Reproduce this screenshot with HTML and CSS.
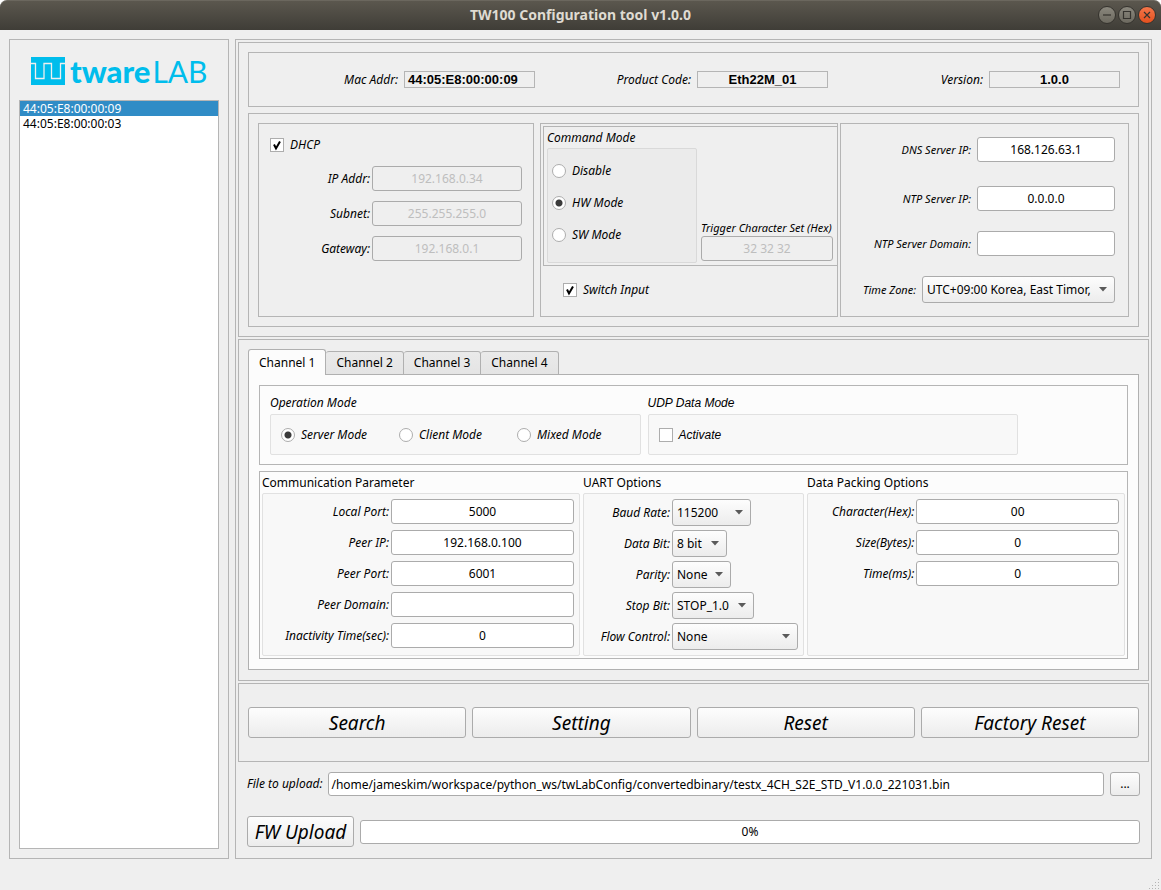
FILE: index.html
```html
<!DOCTYPE html>
<html lang="en">
<head>
<meta charset="utf-8">
<title>TW100 Configuration tool v1.0.0</title>
<link rel="stylesheet" href="styles.css">
</head>
<body>
<div class="window">
  <header class="titlebar">
    <h1 class="window-title">TW100 Configuration tool v1.0.0</h1>
    <div class="window-buttons">
      <button class="win-btn" type="button" aria-label="Minimize"><svg viewBox="0 0 16 16"><path d="M4 8h8"/></svg></button>
      <button class="win-btn" type="button" aria-label="Maximize"><svg viewBox="0 0 16 16"><path d="M4.500 4.500h7v7h-7z"/></svg></button>
      <button class="win-btn win-close" type="button" aria-label="Close"><svg viewBox="0 0 16 16"><path d="M5 5l6 6M11 5l-6 6"/></svg></button>
    </div>
  </header>

  <main class="workspace">
    <aside class="frame sidebar">
      <div class="logo">
        <svg class="logo-mark" viewBox="0 0 34 28" aria-hidden="true">
          <path fill="#00bdec" d="M0 0h34v28H0z"/>
          <path fill="none" stroke="#efefef" stroke-width="1.300" d="M0 6.500H4.500V21.500H13V6.500H20.500V21.500H29.500V6.500H34"/>
        </svg>
        <span class="logo-bold">tware</span><span class="logo-light">LAB</span>
      </div>
      <ul class="device-list">
        <li class="device selected">44:05:E8:00:00:09</li>
        <li class="device">44:05:E8:00:00:03</li>
      </ul>
    </aside>

    <div class="frame content">
      <section class="frame section">
        <div class="frame info">
          <div class="info-item"><label for="mac">Mac Addr:</label><output id="mac" class="readout readout-left">44:05:E8:00:00:09</output></div>
          <div class="info-item"><label for="product">Product Code:</label><output id="product" class="readout">Eth22M_01</output></div>
          <div class="info-item"><label for="version">Version:</label><output id="version" class="readout">1.0.0</output></div>
        </div>

        <div class="frame network">
          <div class="frame dhcp">
            <label class="check"><input type="checkbox" checked>DHCP</label>
            <div class="dhcp-fields">
              <label for="ip">IP Addr:</label><input class="field" id="ip" type="text" value="192.168.0.34" disabled>
              <label for="subnet">Subnet:</label><input class="field" id="subnet" type="text" value="255.255.255.0" disabled>
              <label for="gateway">Gateway:</label><input class="field" id="gateway" type="text" value="192.168.0.1" disabled>
            </div>
          </div>

          <div class="frame command">
            <div class="frame command-frame">
              <h2 class="group-title italic">Command Mode</h2>
              <div class="command-row">
                <div class="group command-group">
                  <label class="check"><input type="radio" name="command">Disable</label>
                  <label class="check"><input type="radio" name="command" checked>HW Mode</label>
                  <label class="check"><input type="radio" name="command">SW Mode</label>
                </div>
                <div class="trigger">
                  <label class="small" for="trigger">Trigger Character Set (Hex)</label>
                  <input class="field" id="trigger" type="text" value="32 32 32" disabled>
                </div>
              </div>
            </div>
            <label class="check switch-input"><input type="checkbox" checked>Switch Input</label>
          </div>

          <div class="frame servers">
            <div class="server-row"><label class="small" for="dns">DNS Server IP:</label><input class="field" id="dns" type="text" value="168.126.63.1"></div>
            <div class="server-row"><label class="small" for="ntp">NTP Server IP:</label><input class="field" id="ntp" type="text" value="0.0.0.0"></div>
            <div class="server-row"><label class="small" for="ntp-domain">NTP Server Domain:</label><input class="field" id="ntp-domain" type="text"></div>
            <div class="server-row zone-row"><label class="small" for="zone">Time Zone:</label><select class="combo" id="zone"><option>UTC+09:00 Korea, East Timor, F</option></select></div>
          </div>
        </div>
      </section>

      <section class="frame section channels">
        <div class="tabs" role="tablist">
          <button class="tab active" type="button" role="tab" aria-selected="true">Channel 1</button>
          <button class="tab" type="button" role="tab">Channel 2</button>
          <button class="tab" type="button" role="tab">Channel 3</button>
          <button class="tab" type="button" role="tab">Channel 4</button>
        </div>
        <div class="pane">
          <div class="frame modes">
            <div class="mode">
              <h2 class="group-title italic">Operation Mode</h2>
              <div class="group mode-group">
                <label class="check"><input type="radio" name="operation" checked>Server Mode</label>
                <label class="check"><input type="radio" name="operation">Client Mode</label>
                <label class="check"><input type="radio" name="operation">Mixed Mode</label>
              </div>
            </div>
            <div class="mode arial">
              <h2 class="group-title italic">UDP Data Mode</h2>
              <div class="group mode-group">
                <label class="check"><input type="checkbox">Activate</label>
              </div>
            </div>
          </div>

          <div class="frame params">
            <div class="param comm">
              <h2 class="group-title">Communication Parameter</h2>
              <div class="group param-group">
                <label for="local-port">Local Port:</label><input class="field" id="local-port" type="text" value="5000">
                <label for="peer-ip">Peer IP:</label><input class="field" id="peer-ip" type="text" value="192.168.0.100">
                <label for="peer-port">Peer Port:</label><input class="field" id="peer-port" type="text" value="6001">
                <label for="peer-domain">Peer Domain:</label><input class="field" id="peer-domain" type="text">
                <label for="inactivity">Inactivity Time(sec):</label><input class="field" id="inactivity" type="text" value="0">
              </div>
            </div>
            <div class="param uart">
              <h2 class="group-title">UART Options</h2>
              <div class="group param-group">
                <label for="baud">Baud Rate:</label><select class="combo w-baud" id="baud"><option>115200</option></select>
                <label for="data-bit">Data Bit:</label><select class="combo w-data" id="data-bit"><option>8 bit</option></select>
                <label for="parity">Parity:</label><select class="combo w-parity" id="parity"><option>None</option></select>
                <label for="stop-bit">Stop Bit:</label><select class="combo w-stop" id="stop-bit"><option>STOP_1.0</option></select>
                <label for="flow">Flow Control:</label><select class="combo" id="flow"><option>None</option></select>
              </div>
            </div>
            <div class="param packing">
              <h2 class="group-title">Data Packing Options</h2>
              <div class="group param-group">
                <label for="char">Character(Hex):</label><input class="field" id="char" type="text" value="00">
                <label for="size">Size(Bytes):</label><input class="field" id="size" type="text" value="0">
                <label for="time">Time(ms):</label><input class="field" id="time" type="text" value="0">
              </div>
            </div>
          </div>
        </div>
      </section>

      <section class="frame actions">
        <button class="btn big" type="button">Search</button>
        <button class="btn big" type="button">Setting</button>
        <button class="btn big" type="button">Reset</button>
        <button class="btn big" type="button">Factory Reset</button>
      </section>

      <div class="upload-row file-row">
        <label for="file">File to upload:</label>
        <input class="field path" id="file" type="text" value="/home/jameskim/workspace/python_ws/twLabConfig/convertedbinary/testx_4CH_S2E_STD_V1.0.0_221031.bin">
        <button class="btn browse" type="button">...</button>
      </div>
      <div class="upload-row">
        <button class="btn big fw" type="button">FW Upload</button>
        <div class="progress" role="progressbar" aria-valuemin="0" aria-valuemax="100" aria-valuenow="0">0%</div>
      </div>
    </div>
  </main>

  <footer class="statusbar">
    <svg class="grip" viewBox="0 0 12 12" aria-hidden="true"><path fill="#b4b4b4" d="M10 1h1v1h-1zM10 4h1v1h-1zM7 4h1v1h-1zM10 7h1v1h-1zM7 7h1v1h-1zM4 7h1v1h-1zM10 10h1v1h-1zM7 10h1v1h-1zM4 10h1v1h-1zM1 10h1v1h-1z"/></svg>
  </footer>
</div>
</body>
</html>
```
FILE: styles.css
```css
* { box-sizing: border-box; }

body {
  margin: 0;
  background: #fff;
  color: #000;
  font: 12px/16px "Noto Sans", sans-serif;
}

button, input, select { font: inherit; color: inherit; margin: 0; }
label { font-style: italic; white-space: nowrap; }

.window {
  display: flex;
  flex-direction: column;
  min-height: 100vh;
  background: #efefef;
  border-radius: 7px 7px 0 0;
}

.titlebar {
  display: grid;
  grid-template-columns: 1fr auto 1fr;
  align-items: center;
  height: 30px;
  padding: 0 5px 1px;
  background: linear-gradient(#5b574e, #3f3d37);
  border-top: 1px solid #6b675e;
  border-radius: 7px 7px 0 0;
}
.window-title {
  grid-column: 2;
  margin: 0;
  color: #dfdbd2;
  font-size: 14px;
  line-height: 20px;
}
.window-buttons { display: flex; justify-content: flex-end; gap: 2px; }
.win-btn {
  width: 18px;
  height: 18px;
  padding: 0;
  border: 1px solid #35332e;
  border-radius: 50%;
  background: linear-gradient(#8a877d, #6c695f);
}
.win-btn svg {
  display: block;
  width: 16px;
  height: 16px;
  fill: none;
  stroke: #35332e;
  stroke-width: 1.2;
}
.win-close { background: linear-gradient(#f4764a, #e3501e); }

.frame { border: 1px solid #b5b5b5; }
.group {
  border: 1px solid #d9d9d9;
  border-radius: 2px;
  background: #ebebeb;
}
.pane .group { border-color: #e1e1e1; background: #f8f8f8; }
.group-title { margin: 0; font-size: 12px; font-weight: 400; line-height: 16px; }
.italic { font-style: italic; }
.small { font-size: 11px; }
.arial { font-family: "Liberation Sans", sans-serif; }

.workspace { flex: 1; display: flex; gap: 6px; padding: 9px 9px 0; }

.sidebar { flex: none; width: 220px; display: flex; flex-direction: column; padding: 9px; }
.logo {
  display: flex;
  align-items: center;
  height: 51px;
  padding: 0 12px 8px;
  color: #00bdec;
  font: 900 31px/40px Lato, sans-serif;
}
.logo-mark { flex: none; width: 34px; height: 28px; margin-right: 5px; }
.logo-light { margin-left: 2px; font-weight: 400; font-size: 30px; }
.device-list {
  flex: 1;
  margin: 0;
  padding: 0;
  list-style: none;
  border: 1px solid #b5b5b5;
  background: #fff;
}
.device { padding: 0 3px; line-height: 15px; }
.selected { background: #308cc6; color: #fff; }

.content { flex: 1; min-width: 0; padding: 2px 2px 10px; }
.section { padding: 9px; margin-bottom: 2px; }

.info {
  display: grid;
  grid-template-columns: 286fr 293fr 292fr;
  align-items: center;
  padding: 18px 18px 18px 0;
  margin-bottom: 6px;
}
.info-item { display: flex; justify-content: flex-end; align-items: center; gap: 6px; }
.readout {
  width: 131px;
  padding: 0 3px;
  border: 1px solid #b5b5b5;
  font: bold 13px/15px "Liberation Sans", sans-serif;
  text-align: center;
}
.readout-left { text-align: left; }

.network {
  display: grid;
  grid-template-columns: 282fr 300fr 289fr;
  padding: 9px;
}
.dhcp { margin-right: 6px; padding: 13px 11px; }
.command { margin-right: 2px; padding: 2px 0 18px 2px; }
.servers { padding: 13px; }

.check { display: flex; align-items: center; gap: 6px; }
input[type="checkbox"], input[type="radio"] {
  appearance: none;
  flex: none;
  width: 14px;
  height: 14px;
  border: 1px solid #adadad;
  background: #fff center no-repeat;
}
input[type="radio"] { border-radius: 50%; }
input[type="checkbox"]:checked {
  background-image: url("data:image/svg+xml,%3Csvg xmlns='http://www.w3.org/2000/svg' width='12' height='12'%3E%3Cpath d='M3 5.500L5 9.500L9 2.500' fill='none' stroke='%23000' stroke-width='2'/%3E%3C/svg%3E");
}
input[type="radio"]:checked { background-image: radial-gradient(circle, #3b3b3b 3px, transparent 4px); }

.field {
  width: 100%;
  min-width: 0;
  height: 25px;
  padding: 0 3px;
  border: 1px solid #ababab;
  border-radius: 3px;
  background: #fff;
  text-align: center;
}
.field:disabled { background: #efefef; color: #bebebe; }

.combo {
  appearance: none;
  width: 100%;
  min-width: 0;
  height: 27px;
  padding: 0 20px 0 4px;
  border: 1px solid #ababab;
  border-radius: 3px;
  background:
    url("data:image/svg+xml,%3Csvg xmlns='http://www.w3.org/2000/svg' width='8' height='5'%3E%3Cpath d='M0 0h8L4 4.500z' fill='%235a5a5a'/%3E%3C/svg%3E") right 7px center no-repeat,
    linear-gradient(#fdfdfd, #ececec);
}

.dhcp-fields {
  display: grid;
  grid-template-columns: 100fr 150fr;
  align-items: center;
  gap: 10px 2px;
  padding-top: 13px;
}
.dhcp-fields label { text-align: right; }

.command-frame { padding: 3px 4px 2px 3px; border-right: 0; }
.command-row {
  display: grid;
  grid-template-columns: 150fr 132fr;
  gap: 4px;
  align-items: end;
  margin-top: 2px;
}
.command-group {
  display: grid;
  gap: 16px;
  padding: 14px 4px 19px;
}
.trigger { padding-bottom: 2px; }
.trigger label { display: block; }
.switch-input { margin: 16px 0 0 20px; }

.server-row { display: flex; justify-content: flex-end; align-items: center; gap: 6px; }
.server-row .field { width: 138px; }
.server-row .combo { width: 193px; }
.server-row:nth-child(2) { margin: 24px 0 20px; }
.zone-row { margin-top: 20px; }

.tabs { display: flex; align-items: flex-end; }
.tab {
  height: 24px;
  margin-bottom: -1px;
  padding: 0 10px;
  border: 1px solid #b0b0b0;
  border-left: 0;
  border-radius: 3px 3px 0 0;
  background: linear-gradient(#eaeaea, #e4e4e4);
}
.tab.active {
  position: relative;
  height: 26px;
  border-left: 1px solid #b0b0b0;
  border-bottom: 0;
  background: #fcfcfc;
}
.channels { padding-bottom: 10px; }
.pane { padding: 10px; border: 1px solid #b0b0b0; background: #fcfcfc; }

.modes {
  display: grid;
  grid-template-columns: 1fr 1fr;
  gap: 7px;
  padding: 9px 109px 9px 10px;
  margin-bottom: 6px;
}
.mode-group { display: flex; align-items: center; height: 41px; margin-top: 3px; padding-left: 10px; }
.mode-group .check { flex: 0 1 118px; }

.params { display: grid; grid-template-columns: 318fr 221fr 318fr; gap: 3px; padding: 2px; }
.param { display: flex; flex-direction: column; }
.param .group-title { margin: 1px 0 2px; }
.param-group {
  flex: 1;
  display: grid;
  align-items: center;
  align-content: start;
  gap: 6px 2px;
  padding: 5px;
}
.param-group label { text-align: right; }
.comm .param-group { grid-template-columns: 121fr 183fr; }
.uart .param-group { grid-template-columns: 81fr 126fr; row-gap: 4px; }
.packing .param-group { grid-template-columns: 101fr 202fr; }
.w-baud { width: 79px; }
.w-data { width: 55px; }
.w-parity { width: 59px; }
.w-stop { width: 82px; }

.actions {
  display: grid;
  grid-template-columns: repeat(4, 1fr);
  gap: 6px;
  padding: 23px 9px;
}
.btn {
  border: 1px solid #ababab;
  border-radius: 3px;
  background: linear-gradient(#fdfdfd, #ececec);
}
.big { height: 31px; padding: 0 4px; font-size: 19px; font-style: italic; line-height: 26px; }

.upload-row { display: flex; align-items: center; gap: 6px; padding: 0 9px; }
.file-row { margin: 10px 0 20px; }
.path { flex: 1; height: 24px; padding: 0 2px; text-align: left; }
.browse { width: 30px; height: 24px; padding: 0; }
.fw { flex: none; min-width: 107px; }
.progress {
  flex: 1;
  height: 24px;
  border: 1px solid #ababab;
  border-radius: 3px;
  background: #fff;
  line-height: 22px;
  text-align: center;
}

.statusbar { display: flex; justify-content: flex-end; align-items: flex-end; height: 31px; padding: 0 1px 0 0; }
.grip { width: 12px; height: 12px; }
```
